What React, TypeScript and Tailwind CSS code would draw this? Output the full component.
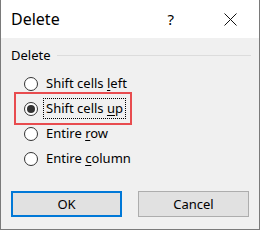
import React from 'react';

const font = { fontFamily: '"Segoe UI", "Noto Sans", "Open Sans", sans-serif' };

const Radio: React.FC<{ checked?: boolean }> = ({ checked }) => (
  <span className="w-[14px] h-[14px] rounded-full border border-[#333333] bg-white flex items-center justify-center shrink-0">
    {checked && <span className="w-[8px] h-[8px] rounded-full bg-[#333333]" />}
  </span>
);

const Option: React.FC<{ pre: string; key_: string; post: string; checked?: boolean }> = ({ pre, key_, post, checked }) => (
  <div className="h-[25px] flex items-center pl-[23px]">
    <Radio checked={checked} />
    <span className="ml-[8px] text-[13px] leading-none text-black">
      {pre}
      <span className="underline underline-offset-2">{key_}</span>
      {post}
    </span>
  </div>
);

export default function App() {
  return (
    <div className="w-[260px] h-[230px] flex flex-col border-x border-b border-[#7a7a7a] bg-[#f0f0f0] text-black" style={font}>
      <div className="h-[38px] bg-white flex items-center shrink-0">
        <span className="ml-[10px] text-[16px] leading-none">Delete</span>
        <span className="ml-auto mr-[50px] text-[15px] leading-none">?</span>
        <svg width="13" height="13" viewBox="0 0 13 13" className="mr-[22px]">
          <path d="M0.5 0.5 L12.5 12.5 M12.5 0.5 L0.5 12.5" stroke="#111" strokeWidth="1" />
        </svg>
      </div>

      <div className="flex-1 flex flex-col">
        <div className="mt-[9px] h-[16px] flex items-center pl-[10px] pr-[8px]">
          <span className="text-[13px] leading-none">Delete</span>
          <span className="ml-[6px] flex-1 h-px bg-[#dcdcdc]" />
        </div>

        <div className="mt-[8px] flex flex-col">
          <Option pre="Shift cells " key_="l" post="eft" />
          <div className="h-[33px] -my-[4px] ml-[13px] w-[118px] border-2 border-[#e84c4f] flex items-center pl-[8px]">
            <Radio checked />
            <span className="ml-[5px] px-[2px] py-[3px] border border-dotted border-black text-[13px] leading-none">
              Shift cells <span className="underline underline-offset-2">u</span>p
            </span>
          </div>
          <Option pre="Entire " key_="r" post="ow" />
          <Option pre="Entire " key_="c" post="olumn" />
        </div>

        <div className="mt-[20px] flex pl-[10px] gap-[16px]">
          <button className="w-[111px] h-[26px] bg-[#e1e1e1] border-2 border-[#0078d7] text-[13px] leading-none">OK</button>
          <button className="w-[111px] h-[26px] bg-[#e1e1e1] border border-[#adadad] text-[13px] leading-none">Cancel</button>
        </div>
      </div>
    </div>
  );
}
